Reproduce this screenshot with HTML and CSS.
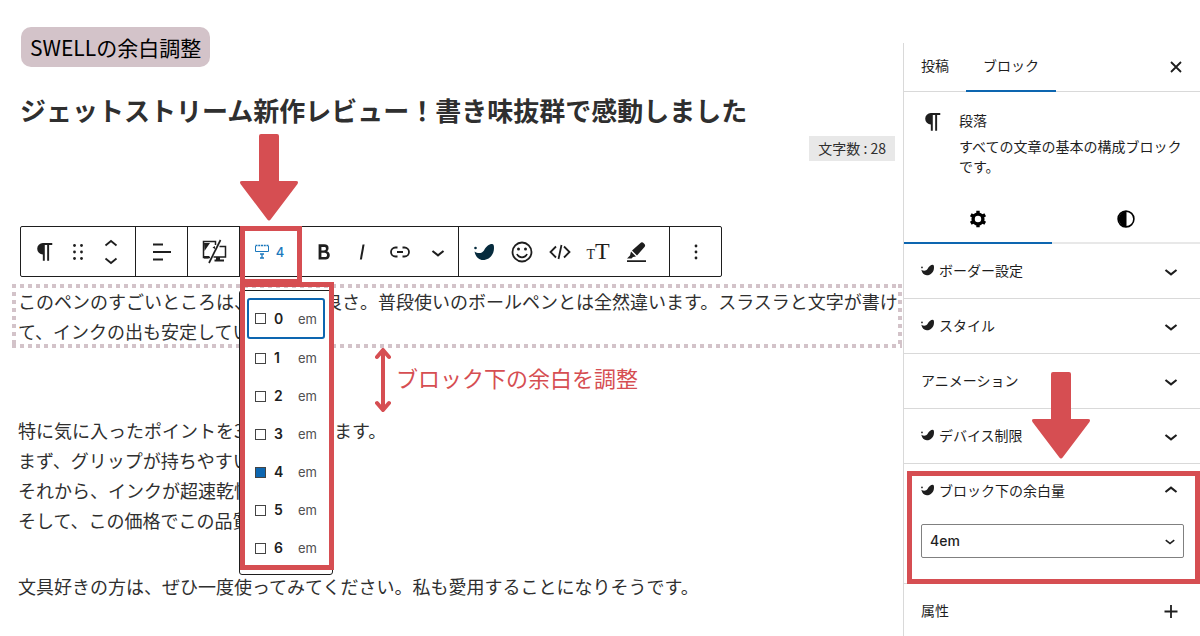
FILE: index.html
```html
<!DOCTYPE html>
<html lang="ja">
<head>
<meta charset="utf-8">
<title>SWELLの余白調整</title>
<link rel="stylesheet" href="styles.css">
</head>
<body>
<svg class="sprite" aria-hidden="true">
  <symbol id="pilcrow" viewBox="0 0 24 24"><path d="M10 14.200v-.2V20h1.800V5.500H14V20h1.800V5.500h2.900V3.800H10a5.200 5.200 0 0 0 0 10.400z"/></symbol>
  <symbol id="down" viewBox="0 0 24 24"><path d="M17.700 11.700 12 16.300l-5.700-4.600 1.200-1.400L12 13.900l4.500-3.600z"/></symbol>
  <symbol id="up" viewBox="0 0 24 24"><path d="M6.300 12.300 12 7.700l5.700 4.600-1.200 1.400L12 10.100l-4.500 3.600z"/></symbol>
  <symbol id="leaf" viewBox="0 0 20 18"><circle cx="1.500" cy="5" r="1.300"/><path d="M.5 8.500C4 11 8 10.500 10 7.500 12 3.500 15 1 18 1c1.600 0 2 1.500 2 4 0 7-5 12-11 12C4.500 17 1.500 13.500.5 8.500z"/></symbol>
  <symbol id="arrow" viewBox="0 0 58 87"><path d="M21 0h16a2 2 0 0 1 2 2v45h17q3 0 1.500 3L31 85q-2 3-4 0L.5 50Q-1 47 2 47h17V2a2 2 0 0 1 2-2z"/></symbol>
</svg>
<div class="layout">
  <main class="editor">
    <div class="badge">SWELLの余白調整</div>
    <h1 class="title">ジェットストリーム新作レビュー！書き味抜群で感動しました</h1>
    <div class="count">文字数 : 28</div>

    <div class="toolbar" role="toolbar" aria-label="ブロックツール">
      <div class="group group-block">
        <button aria-label="段落"><svg class="icon"><use href="#pilcrow"/></svg></button>
        <button aria-label="ドラッグ"><svg class="icon" viewBox="0 0 26 26"><g><circle cx="9.500" cy="6.500" r="1.400"/><circle cx="16.500" cy="6.500" r="1.400"/><circle cx="9.500" cy="13" r="1.400"/><circle cx="16.500" cy="13" r="1.400"/><circle cx="9.500" cy="19.500" r="1.400"/><circle cx="16.500" cy="19.500" r="1.400"/></g></svg></button>
        <button aria-label="移動"><svg class="icon line" viewBox="0 0 26 26"><path d="M7.500 6.500 13 2l5.500 4.500M7.500 19.500 13 24l5.500-4.500"/></svg></button>
      </div>
      <div class="group group-single">
        <button aria-label="配置"><svg class="icon line" viewBox="0 0 26 26"><path d="M4 5.500h10M4 13h18M4 20.500h10"/></svg></button>
      </div>
      <div class="group group-single">
        <button aria-label="デバイス制限"><svg class="icon" viewBox="0 0 26 26"><g fill="none" stroke="currentColor" stroke-width="1.500"><path d="M14.500 6V2.500H2.500v16h6.500"/><path d="M18.500 7.500h6V18H12.500"/><path d="M19.500 1 8 24" stroke-width="1.700"/></g><path d="M3 4h6L3.500 12zM15 18h4v2.500h4v2h-9.500v-2H15zM3 17h5.500l-1 2.500H3zM11.500 8.500 14 7v3z"/></svg></button>
      </div>
      <div class="group group-margin">
        <button class="margin-button" aria-label="ブロック下の余白量 4" aria-expanded="true">
          <svg class="margin-icon" viewBox="0 0 16 16"><g fill="none" stroke="currentColor"><path d="M1.500 2v5.500h13V2"/><path d="M1.500 1.500h13" stroke-width="1.500" stroke-dasharray="2 .75"/><path d="M8 9.500v5M6 10h4M6 14h4" stroke-width="1.300"/></g></svg>
          <span>4</span>
        </button>
        <div class="menu">
          <label class="option focused"><input type="radio" name="margin"><b>0</b><span>em</span></label>
          <label class="option"><input type="radio" name="margin"><b>1</b><span>em</span></label>
          <label class="option"><input type="radio" name="margin"><b>2</b><span>em</span></label>
          <label class="option"><input type="radio" name="margin"><b>3</b><span>em</span></label>
          <label class="option"><input type="radio" name="margin" checked><b>4</b><span>em</span></label>
          <label class="option"><input type="radio" name="margin"><b>5</b><span>em</span></label>
          <label class="option"><input type="radio" name="margin"><b>6</b><span>em</span></label>
          <div class="frame frame-menu"></div>
        </div>
        <div class="frame frame-button"></div>
        <svg class="arrow arrow-button"><use href="#arrow"/></svg>
      </div>
      <div class="group group-format">
        <button aria-label="太字"><svg class="icon" viewBox="0 0 24 24"><path d="M14.700 11.300c1-.6 1.500-1.600 1.500-3 0-2.300-1.300-3.400-4-3.400H7v14h5.800c1.400 0 2.500-.3 3.300-1 .8-.7 1.200-1.700 1.200-2.900.1-1.900-.8-3.100-2.600-3.700zm-5.100-4h2.300c.6 0 1.100.1 1.400.4.3.3.5.7.5 1.200s-.2 1-.5 1.200c-.3.3-.8.4-1.400.4H9.600V7.300zm4.600 9c-.4.3-1 .4-1.700.4H9.600v-3.900h2.900c.7 0 1.300.2 1.700.5.4.3.6.8.6 1.500s-.2 1.200-.6 1.500z"/></svg></button>
        <button aria-label="イタリック"><svg class="icon" viewBox="0 0 24 24"><path d="M12.500 5 10 19h1.900l2.500-14z"/></svg></button>
        <button aria-label="リンク"><svg class="icon line" viewBox="0 0 26 26"><path d="M10.500 8.500H8.500a4.500 4.500 0 0 0 0 9h2M15.500 8.500h2a4.500 4.500 0 0 1 0 9h-2M10 13h6"/></svg></button>
        <button aria-label="さらに表示"><svg class="icon"><use href="#down"/></svg></button>
      </div>
      <div class="group group-extra">
        <button aria-label="SWELL"><svg class="leaf-large"><use href="#leaf"/></svg></button>
        <button aria-label="絵文字"><svg class="icon line" viewBox="0 0 26 26"><circle cx="13" cy="13" r="9.500"/><path d="M8 15c2 4.500 8 4.500 10 0"/><g fill="currentColor" stroke="none"><circle cx="9.500" cy="10" r="1.500"/><circle cx="16.500" cy="10" r="1.500"/></g></svg></button>
        <button aria-label="コード"><svg class="icon line" viewBox="0 0 26 26"><path d="m9 7.500-5.500 5.500L9 18.500M17 7.500l5.500 5.500-5.500 5.500M14.500 6l-3 14"/></svg></button>
        <button class="type-size" aria-label="文字サイズ"><span class="small-t">T</span><span class="large-t">T</span></button>
        <button aria-label="マーカー"><svg class="icon" viewBox="0 0 26 26"><path d="M9 11.500 17.500 4q1.500-1.500 3.500.5t.5 3.500L14 16.500zM8 12.500l5 5-3 .5-1.500 1.500H4l3-3zM4 21.300h19V23H4z"/></svg></button>
      </div>
      <div class="group group-single">
        <button aria-label="オプション"><svg class="icon" viewBox="0 0 26 26"><circle cx="13" cy="7" r="1.400"/><circle cx="13" cy="13" r="1.400"/><circle cx="13" cy="19" r="1.400"/></svg></button>
      </div>
    </div>

    <div class="selected">
      <p>このペンのすごいところは、書き味の良さ。普段使いのボールペンとは全然違います。スラスラと文字が書けて、インクの出も安定しています。</p>
      <div class="note">
        <svg class="note-arrow" viewBox="0 0 16 64"><path d="M8 3v58M2 9l6-7 6 7M2 55l6 7 6-7"/></svg>
        <span>ブロック下の余白を調整</span>
      </div>
    </div>
    <p class="points">特に気に入ったポイントを3つご紹介します。<br>まず、グリップが持ちやすい。<br>それから、インクが超速乾性。<br>そして、この価格でこの品質。</p>
    <p class="closing">文具好きの方は、ぜひ一度使ってみてください。私も愛用することになりそうです。</p>
  </main>

  <aside class="sidebar">
    <div class="tabs">
      <button class="tab">投稿</button>
      <button class="tab active">ブロック</button>
      <button class="close" aria-label="閉じる"><svg viewBox="0 0 12 12"><path d="m1 1 10 10M11 1 1 11"/></svg></button>
    </div>
    <div class="card">
      <svg class="icon"><use href="#pilcrow"/></svg>
      <div>
        <h2>段落</h2>
        <p>すべての文章の基本の構成ブロックです。</p>
      </div>
    </div>
    <div class="subtabs">
      <button class="active" aria-label="設定"><svg viewBox="0 0 18 18"><circle cx="9" cy="9" r="4.900" fill="none" stroke="currentColor" stroke-width="3.400"/><path d="M9 .7v3M9 14.300v3M1.800 4.800l2.600 1.500M13.600 11.700l2.600 1.500M16.200 4.800l-2.600 1.500M4.400 11.700l-2.600 1.500" stroke="currentColor" stroke-width="3.400"/></svg></button>
      <button aria-label="スタイル"><svg viewBox="0 0 18 18"><circle cx="9" cy="9" r="7.900" fill="none" stroke="currentColor" stroke-width="1.600"/><path d="M9.500 1.200a7.800 7.800 0 0 0 0 15.600z"/></svg></button>
    </div>
    <button class="panel"><svg class="leaf"><use href="#leaf"/></svg><span>ボーダー設定</span><svg class="icon"><use href="#down"/></svg></button>
    <button class="panel"><svg class="leaf"><use href="#leaf"/></svg><span>スタイル</span><svg class="icon"><use href="#down"/></svg></button>
    <button class="panel"><span>アニメーション</span><svg class="icon"><use href="#down"/></svg></button>
    <div class="device">
      <button class="panel"><svg class="leaf"><use href="#leaf"/></svg><span>デバイス制限</span><svg class="icon"><use href="#down"/></svg></button>
      <svg class="arrow arrow-panel"><use href="#arrow"/></svg>
    </div>
    <section class="margin-panel">
      <button class="panel open" id="margin-label"><svg class="leaf"><use href="#leaf"/></svg><span>ブロック下の余白量</span><svg class="icon"><use href="#up"/></svg></button>
      <div class="select">
        <select aria-labelledby="margin-label"><option>4em</option></select>
        <svg class="select-icon"><use href="#down"/></svg>
      </div>
      <div class="frame frame-panel"></div>
    </section>
    <button class="panel attributes"><span>属性</span><svg class="icon line" viewBox="0 0 26 26"><path d="M13 7v13M6.500 13.500h13"/></svg></button>
  </aside>
</div>
</body>
</html>
```
FILE: styles.css
```css
:root {
  --red: #d64e52;
  --blue: #0d66b0;
  --ink: #1e1e1e;
  --mauve: #d3c3c9;
  --line: #d9d9d9;
}
* { box-sizing: border-box; }
body {
  margin: 0;
  background: #fff;
  color: var(--ink);
  font-family: "Noto Sans CJK JP", sans-serif;
}
h1, h2, p { margin: 0; }
button {
  margin: 0;
  padding: 0;
  border: 0;
  background: none;
  color: inherit;
  font: inherit;
}
svg { display: block; fill: currentColor; flex: none; }
.sprite { position: absolute; width: 0; height: 0; }
.icon { width: 26px; height: 26px; }
.line { fill: none; stroke: currentColor; stroke-width: 1.8; }
.layout { display: flex; align-items: flex-start; }

/* Editor */
.editor {
  flex: 1;
  min-width: 0;
  display: flex;
  flex-direction: column;
  align-items: flex-start;
  padding-top: 27px;
  color: #2f2f2f;
  font-size: 18px;
  line-height: 30px;
}
.badge {
  margin-left: 21px;
  padding: 0 9px;
  border-radius: 10px;
  background: var(--mauve);
  color: #000;
  font-size: 21px;
  line-height: 40px;
}
.title {
  margin: 23px 0 0 20px;
  font-size: 26px;
  line-height: 40px;
}
.count {
  align-self: flex-end;
  margin: 6px 8px 0 0;
  padding: 0 9px;
  background: #e8e8e8;
  font-size: 14px;
  line-height: 25px;
}
.toolbar {
  display: flex;
  height: 51px;
  margin: 65px 0 0 20px;
  border: 1px solid var(--ink);
  border-radius: 2px;
  background: #fff;
  color: var(--ink);
}
.group { display: flex; border-right: 1px solid var(--ink); }
.group:last-child { border-right: 0; }
.group button {
  display: flex;
  align-items: center;
  justify-content: center;
  width: 38px;
}
.group-block { padding: 0 8px 0 7px; }
.group-block button { width: 33px; }
.group-single button { width: 51px; }
.group-margin { position: relative; width: 59px; }
.group-format { padding: 0 1px 0 6px; }
.group-extra { padding: 0 14px 0 6px; }
.group .margin-button {
  flex: 1;
  gap: 6px;
  color: #1b78bd;
  font: 500 13px/20px Inter, sans-serif;
}
.margin-icon { width: 16px; height: 16px; }
.leaf-large { width: 20px; height: 18px; color: #062b3d; }
.group .type-size { align-items: baseline; font-family: "Liberation Serif", serif; line-height: 49px; }
.small-t { font-size: 14px; }
.large-t { font-size: 24px; }

.menu {
  position: absolute;
  z-index: 2;
  top: 63px;
  left: -1px;
  width: 94px;
  padding: 7px;
  border: 1px solid var(--ink);
  border-radius: 3px;
  background: #fff;
}
.option {
  display: grid;
  grid-template-columns: 12px 24px auto;
  align-items: center;
  height: 38px;
  padding: 0 8px;
  color: #505050;
  font: 13px/20px Inter, sans-serif;
}
.option input {
  appearance: none;
  width: 11px;
  height: 11px;
  margin: 0;
  border: 1px solid #444;
}
.option input:checked { background: var(--blue); }
.option b { padding-left: 7px; color: var(--ink); font-size: 14px; font-weight: 600; }
.option span { padding-left: 7px; }
.option.focused {
  height: 41px;
  padding: 0 6px;
  border: 2px solid var(--blue);
  border-radius: 3px;
}

/* Annotations */
.frame { position: absolute; border: 5px solid var(--red); pointer-events: none; }
.frame-button { z-index: 3; top: -1px; left: 0; width: 62px; height: 58px; }
.frame-menu { top: -9px; left: 0; width: 94px; height: 288px; }
.frame-panel { top: 7px; right: 0; bottom: -1px; left: 3px; }
.arrow { position: absolute; width: 58px; height: 87px; color: var(--red); }
.arrow-button { top: -93px; left: 0; }
.arrow-panel { z-index: 2; bottom: 5px; left: 128px; }

.selected {
  --dots-x: repeating-linear-gradient(90deg, var(--mauve) 0 4px, transparent 4px 8px);
  --dots-y: repeating-linear-gradient(var(--mauve) 0 4px, transparent 4px 8px);
  position: relative;
  align-self: stretch;
  margin: 7px 1px 0 12px;
  padding: 2px 0 2px 6px;
  background:
    var(--dots-x) top / 100% 4px no-repeat,
    var(--dots-x) bottom / 100% 4px no-repeat,
    var(--dots-y) left / 4px 100% no-repeat,
    var(--dots-y) right / 4px 100% no-repeat;
}
.note {
  position: absolute;
  top: 100%;
  left: 363px;
  display: flex;
  align-items: center;
  gap: 5px;
  color: var(--red);
  font-size: 22px;
}
.note span { padding-bottom: 6px; }
.note-arrow {
  width: 16px;
  height: 64px;
  fill: none;
  stroke: var(--red);
  stroke-width: 4;
  stroke-linecap: round;
  stroke-linejoin: round;
}
.points { margin: 67px 0 0 18px; }
.closing { margin: 36px 0 0 18px; }

/* Sidebar */
.sidebar {
  flex: none;
  width: 297px;
  margin-top: 43px;
  border-left: 1px solid var(--line);
  font-size: 14px;
  line-height: 20px;
}
.tabs { display: flex; height: 49px; border-bottom: 1px solid var(--line); }
.tab { height: 49px; padding: 0 17px 3px; border-bottom: 2px solid transparent; }
.tabs .active, .subtabs .active { border-bottom-color: var(--blue); }
.close { margin-left: auto; padding: 0 18px; }
.close svg { width: 12px; height: 12px; stroke: currentColor; stroke-width: 1.8; }
.card { display: flex; gap: 13px; padding: 18px 14px 17px 16px; }
.card .icon { margin-top: -1px; }
.card h2 { margin-bottom: 6px; font-size: 14px; font-weight: 400; }
.subtabs { display: flex; }
.subtabs button {
  display: flex;
  flex: 1;
  align-items: center;
  justify-content: center;
  height: 51px;
  padding-top: 2px;
  border-bottom: 2px solid #e8e8e8;
  color: #000;
}
.subtabs svg { width: 18px; height: 18px; }
.panel {
  display: flex;
  align-items: center;
  width: 100%;
  height: 55px;
  padding: 0 16px 2px 17px;
  border-bottom: 1px solid var(--line);
  text-align: left;
}
.panel .icon { margin: 2px 0 0 auto; }
.leaf { width: 13px; height: 12px; margin-right: 5px; }
.device, .margin-panel { position: relative; }
.margin-panel { padding-bottom: 25px; border-bottom: 1px solid var(--line); }
.panel.open { padding-bottom: 3px; border-bottom: 0; }
.select { position: relative; margin: 5px 16px 0 17px; }
.select select {
  display: block;
  appearance: none;
  width: 100%;
  height: 34px;
  padding: 0 8px;
  border: 1px solid #808080;
  border-radius: 2px;
  background: #fff;
  color: var(--ink);
  font: 500 14px/20px Inter, sans-serif;
}
.select-icon { position: absolute; top: 7px; right: 4px; width: 20px; height: 20px; pointer-events: none; }
.attributes { height: 53px; border-bottom: 0; }
```
